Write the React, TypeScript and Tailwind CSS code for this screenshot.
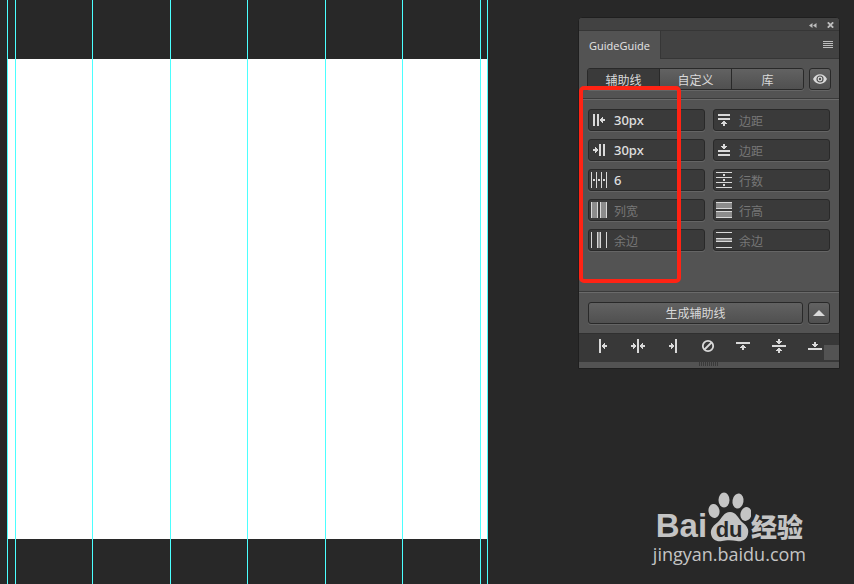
import { ReactNode } from "react"

const guides = [7, 15, 92, 170, 247, 325, 402, 480, 487]

const light = "#d9d9d9"

// x,y is the tip of the arrow
const ArrowLeft = ({ x, y }: { x: number; y: number }) => (
  <path d={`M${x} ${y - 1}h1v-1h1v-1h1v2h2v2h-2v2h-1v-1h-1v-1h-1z`} fill={light} />
)
const ArrowRight = ({ x, y }: { x: number; y: number }) => (
  <path d={`M${x} ${y - 1}h-1v-1h-1v-1h-1v2h-2v2h2v2h1v-1h1v-1h1z`} fill={light} />
)
const ArrowUp = ({ x, y }: { x: number; y: number }) => (
  <path d={`M${x - 1} ${y}h2v1h1v1h1v1h-2v2h-2v-2h-2v-1h1v-1h1z`} fill={light} />
)
const ArrowDown = ({ x, y }: { x: number; y: number }) => (
  <path d={`M${x - 1} ${y}h2v-1h1v-1h1v-1h-2v-2h-2v2h-2v1h1v1h1z`} fill={light} />
)

const Icon = ({ children }: { children: ReactNode }) => (
  <svg
    width="16"
    height="16"
    viewBox="0 0 16 16"
    shapeRendering="crispEdges"
    fill={light}
    aria-hidden="true"
    className="shrink-0"
  >
    {children}
  </svg>
)

const fields = [
  {
    id: "left",
    label: "左边距",
    value: "30px",
    placeholder: "边距",
    icon: (
      <>
        <path d="M2 2h2v12h-2zM6 2h2v12h-2z" />
        <ArrowLeft x={9} y={8} />
      </>
    ),
  },
  {
    id: "top",
    label: "上边距",
    value: "",
    placeholder: "边距",
    icon: (
      <>
        <path d="M2 2h12v2h-12zM2 6h12v2h-12z" />
        <ArrowUp x={8} y={9} />
      </>
    ),
  },
  {
    id: "right",
    label: "右边距",
    value: "30px",
    placeholder: "边距",
    icon: (
      <>
        <path d="M8 2h2v12h-2zM12 2h2v12h-2z" />
        <ArrowRight x={7} y={8} />
      </>
    ),
  },
  {
    id: "bottom",
    label: "下边距",
    value: "",
    placeholder: "边距",
    icon: (
      <>
        <path d="M2 8h12v2h-12zM2 12h12v2h-12z" />
        <ArrowDown x={8} y={7} />
      </>
    ),
  },
  {
    id: "columns",
    label: "列数",
    value: "6",
    placeholder: "列数",
    icon: (
      <path d="M0 0h1v16h-1zM5 0h1v16h-1zM10 0h1v16h-1zM15 0h1v16h-1zM2 7h2v2h-2zM7 7h2v2h-2zM12 7h2v2h-2z" />
    ),
  },
  {
    id: "rows",
    label: "行数",
    value: "",
    placeholder: "行数",
    icon: (
      <path d="M0 0h16v1h-16zM0 5h16v1h-16zM0 10h16v1h-16zM0 15h16v1h-16zM7 2h2v2h-2zM7 7h2v2h-2zM7 12h2v2h-2z" />
    ),
  },
  {
    id: "column-width",
    label: "列宽",
    value: "",
    placeholder: "列宽",
    icon: (
      <>
        <path d="M1 0h5v16h-5zM10 0h5v16h-5z" fill="#8c8c8c" />
        <path d="M0 0h1v16h-1zM6 0h1v16h-1zM9 0h1v16h-1zM15 0h1v16h-1z" />
      </>
    ),
  },
  {
    id: "row-height",
    label: "行高",
    value: "",
    placeholder: "行高",
    icon: (
      <>
        <path d="M0 1h16v5h-16zM0 10h16v5h-16z" fill="#8c8c8c" />
        <path d="M0 0h16v1h-16zM0 6h16v1h-16zM0 9h16v1h-16zM0 15h16v1h-16z" />
      </>
    ),
  },
  {
    id: "column-gutter",
    label: "列余边",
    value: "",
    placeholder: "余边",
    icon: (
      <>
        <path d="M7 0h2v16h-2z" fill="#8c8c8c" />
        <path d="M0 0h1v16h-1zM6 0h1v16h-1zM9 0h1v16h-1zM15 0h1v16h-1z" />
      </>
    ),
  },
  {
    id: "row-gutter",
    label: "行余边",
    value: "",
    placeholder: "余边",
    icon: (
      <>
        <path d="M0 7h16v2h-16z" fill="#8c8c8c" />
        <path d="M0 0h16v1h-16zM0 6h16v1h-16zM0 9h16v1h-16zM0 15h16v1h-16z" />
      </>
    ),
  },
]

const quickGuides = [
  {
    label: "左边缘",
    icon: (
      <>
        <path d="M4 1h2v14h-2z" />
        <ArrowLeft x={7} y={8} />
      </>
    ),
  },
  {
    label: "垂直居中",
    icon: (
      <>
        <path d="M7 1h2v14h-2z" />
        <ArrowRight x={6} y={8} />
        <ArrowLeft x={10} y={8} />
      </>
    ),
  },
  {
    label: "右边缘",
    icon: (
      <>
        <path d="M9 1h2v14h-2z" />
        <ArrowRight x={8} y={8} />
      </>
    ),
  },
  {
    label: "清除",
    icon: (
      <g shapeRendering="auto" fill="none" stroke={light} strokeWidth="1.800">
        <circle cx="7" cy="8" r="5.200" />
        <path d="M3.500 11.500l7-7" />
      </g>
    ),
  },
  {
    label: "上边缘",
    icon: (
      <>
        <path d="M0 4h14v2h-14z" />
        <ArrowUp x={7} y={7} />
      </>
    ),
  },
  {
    label: "水平居中",
    icon: (
      <>
        <path d="M0 7h14v2h-14z" />
        <ArrowDown x={7} y={6} />
        <ArrowUp x={7} y={10} />
      </>
    ),
  },
  {
    label: "下边缘",
    icon: (
      <>
        <path d="M1 10h14v2h-14z" />
        <ArrowDown x={8} y={9} />
      </>
    ),
  },
]

const Field = ({ item }: { item: (typeof fields)[number] }) => (
  <div className="flex h-[22px] items-center gap-[7px] rounded-[3px] border border-[#292929] bg-[#3a3a3a] px-[2px] shadow-[0_1px_0_#656565]">
    <label htmlFor={item.id} aria-label={item.label}>
      <Icon>{item.icon}</Icon>
    </label>
    <input
      id={item.id}
      type="text"
      defaultValue={item.value}
      placeholder={item.placeholder}
      className="w-full min-w-0 bg-transparent text-[13px] leading-5 font-medium text-[#e0e0e0] outline-none placeholder:text-xs placeholder:font-normal placeholder:text-[#777777] placeholder-shown:pt-[2px]"
    />
  </div>
)

const Separator = () => <hr className="h-[2px] border-t border-b border-t-[#3a3a3a] border-b-[#6a6a6a]" />

const button =
  "flex h-[22px] items-center justify-center rounded-[3px] border border-[#292929] bg-linear-to-b from-[#626262] to-[#505050] shadow-[0_1px_0_#656565]"

const Panel = () => (
  <aside className="w-[262px] shrink-0 self-start rounded-t-[4px] border border-[#1f1f1f] bg-[#535353] text-xs text-[#d9d9d9]">
    {/* TITLE BAR */}
    <div className="flex h-3 items-center justify-end gap-[10px] rounded-t-[3px] bg-[#424242] pt-[2px] pr-[5px]">
      <button aria-label="折叠">
        <svg width="8" height="5" viewBox="0 0 8 5" fill="#bdbdbd">
          <path d="M3.500 0v5L0 2.500zM7.500 0v5L4 2.500z" />
        </svg>
      </button>
      <button aria-label="关闭">
        <svg width="7" height="6" viewBox="0 0 7 6" stroke="#bdbdbd" strokeWidth="1.800">
          <path d="M0.800 0.300l5.400 5.400M6.200 0.300l-5.400 5.400" />
        </svg>
      </button>
    </div>
    {/* PANEL TAB */}
    <div className="flex h-[29px] items-stretch justify-between border-t border-[#363636] bg-[#424242]">
      <h2 className="flex w-[82px] items-center justify-center border-r border-[#363636] bg-[#535353] pt-[2px] font-['Open_Sans',sans-serif] text-[11px] text-[#e6e6e6]">
        GuideGuide
      </h2>
      <div className="flex flex-1 items-center justify-end border-b border-[#363636] pr-[6px]">
        <button aria-label="面板菜单">
          <svg width="10" height="7" viewBox="0 0 10 7" fill="#bdbdbd" shapeRendering="crispEdges">
            <path d="M0 0h10v1h-10zM0 2h10v1h-10zM0 4h10v1h-10zM0 6h10v1h-10z" />
          </svg>
        </button>
      </div>
    </div>
    {/* MODES */}
    <div className="flex gap-[5px] px-2 pt-[9px] pb-2">
      <div className="flex h-[22px] flex-1 divide-x divide-[#292929] overflow-hidden rounded-[3px] border border-[#292929] shadow-[0_1px_0_#656565]">
        <button className="flex-1 bg-[#3a3a3a] pt-[2px] leading-5">辅助线</button>
        <button className="flex-1 bg-linear-to-b from-[#626262] to-[#505050] pt-[2px] leading-5">自定义</button>
        <button className="flex-1 bg-linear-to-b from-[#626262] to-[#505050] pt-[2px] leading-5">库</button>
      </div>
      <button aria-label="显示" className={`${button} w-[22px]`}>
        <svg width="14" height="10" viewBox="0 0 14 10">
          <path d="M0 5C3-1.500 11-1.500 14 5C11 11.500 3 11.500 0 5z" fill="#d9d9d9" />
          <circle cx="7" cy="5" r="3" fill="none" stroke="#505050" strokeWidth="1.200" />
          <circle cx="7" cy="5" r="1.200" fill="#505050" />
        </svg>
      </button>
    </div>
    <Separator />
    {/* FIELDS */}
    <div className="grid grid-cols-2 gap-2 px-[9px] pt-[9px] pb-10">
      {fields.map((item) => (
        <Field key={item.id} item={item} />
      ))}
    </div>
    <Separator />
    {/* GENERATE */}
    <div className="flex gap-[5px] p-[9px]">
      <button className={`${button} flex-1 pt-[2px]`}>生成辅助线</button>
      <button aria-label="展开" className={`${button} w-[22px]`}>
        <svg width="12" height="6" viewBox="0 0 12 6" fill="#d9d9d9">
          <path d="M6 0l6 6H0z" />
        </svg>
      </button>
    </div>
    {/* QUICK GUIDES */}
    <div className="relative flex h-[29px] items-center justify-between border-t border-[#303030] bg-[#383838] px-4 pb-1">
      {quickGuides.map((item) => (
        <button key={item.label} aria-label={item.label}>
          <Icon>{item.icon}</Icon>
        </button>
      ))}
      <span className="absolute right-0 bottom-[2px] size-[15px] bg-[#535353]" />
    </div>
    <div className="flex h-[6px] justify-center">
      <svg width="20" height="4" viewBox="0 0 20 4" fill="#3a3a3a" shapeRendering="crispEdges">
        <path d="M0 0h1v4h-1zM2 0h1v4h-1zM4 0h1v4h-1zM6 0h1v4h-1zM8 0h1v4h-1zM10 0h1v4h-1zM12 0h1v4h-1zM14 0h1v4h-1zM16 0h1v4h-1zM18 0h1v4h-1z" />
      </svg>
    </div>
  </aside>
)

const Watermark = () => (
  <div className="absolute right-[48px] bottom-[18px] flex flex-col items-center text-[#c4c4c4]">
    <div className="flex items-end">
      <span className="font-['Liberation_Sans',Arial,sans-serif] text-[33px] leading-8 font-bold">Bai</span>
      <span className="relative flex h-[50px] w-[44px] items-end justify-center">
        <svg width="44" height="50" viewBox="1 0 44 50" fill="#c4c4c4" className="absolute inset-0">
          <ellipse cx="8" cy="19" rx="5.500" ry="7" transform="rotate(-10 8 19)" />
          <ellipse cx="18" cy="8" rx="5.500" ry="7.500" />
          <ellipse cx="32" cy="9" rx="5.500" ry="7.500" transform="rotate(10 32 9)" />
          <ellipse cx="40" cy="22" rx="5.500" ry="7" transform="rotate(15 40 22)" />
          <path d="M24 20C30 20 32 26 36 30C41 34 43 37 42 42C41 48 35 50 31 49C26 48 20 48 16 49C11 50 6 48 5 42C4 37 8 33 12 30C16 26 18 20 24 20z" />
        </svg>
        <span className="relative font-['Liberation_Sans',Arial,sans-serif] text-[22px] leading-6 font-bold text-[#282828]">
          du
        </span>
      </span>
      <span className="font-['Noto_Sans_CJK_SC',sans-serif] text-[26px] leading-8 font-black">经验</span>
    </div>
    <span className="font-['Open_Sans',sans-serif] text-[18px] leading-6">jingyan.baidu.com</span>
  </div>
)

const App = () => {
  return (
    <main className="relative flex min-h-screen items-start justify-between overflow-hidden bg-[#282828] pr-[14px] pl-2 font-['Noto_Sans','Noto_Sans_CJK_SC',sans-serif]">
      {/* ARTBOARD */}
      <div className="mt-[59px] size-[480px] shrink-0 bg-white" />
      {guides.map((x) => (
        <span key={x} className="absolute inset-y-0 w-px bg-[#4bffff]" style={{ left: x }} />
      ))}
      <div className="relative mt-[17px] shrink-0">
        <Panel />
        {/* highlight around the column settings */}
        <div className="pointer-events-none absolute top-[69px] left-px h-[197px] w-[102px] rounded-[5px] border-4 border-[#ff2314]" />
      </div>
      <Watermark />
    </main>
  )
}

export default App
